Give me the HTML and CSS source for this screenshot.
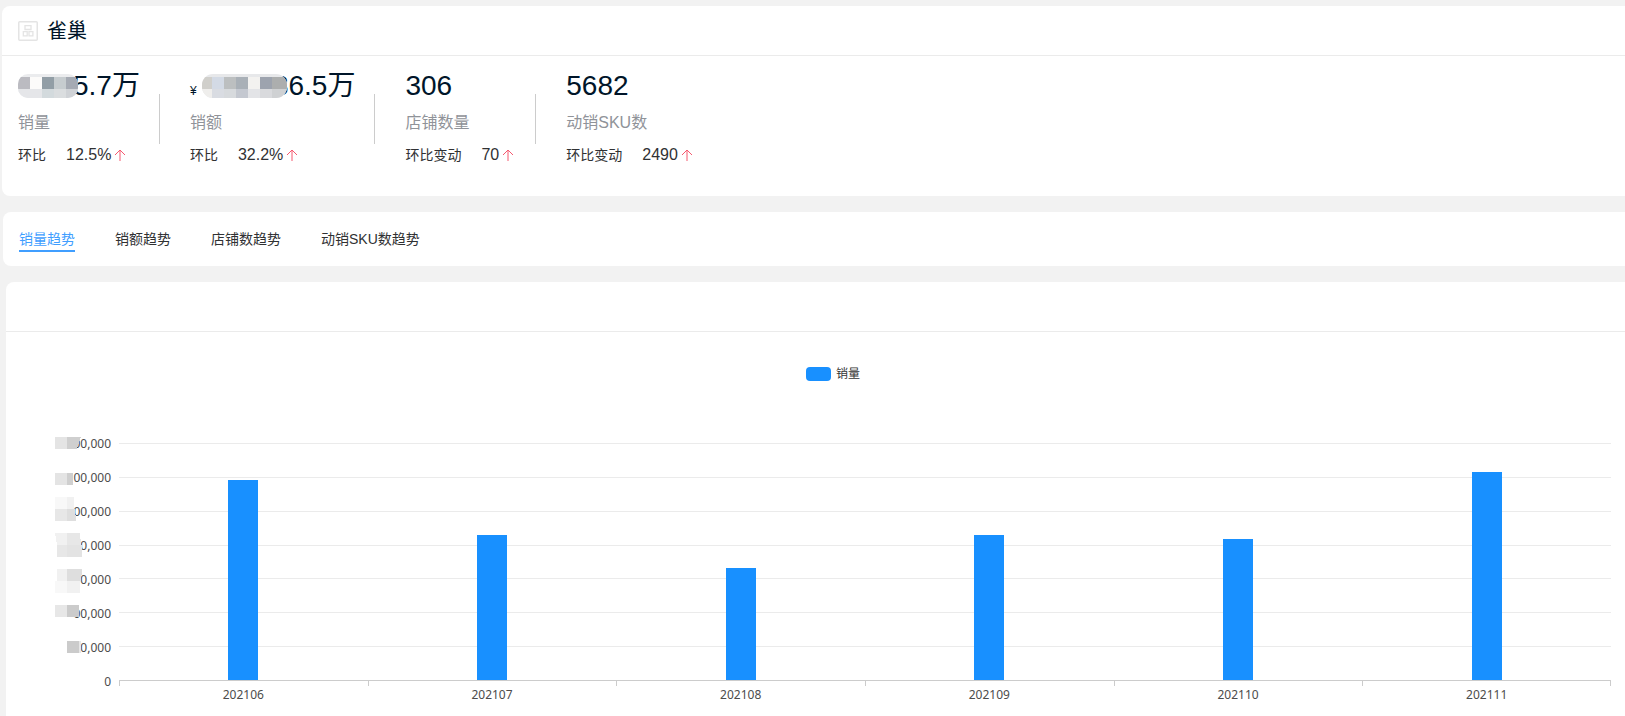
FILE: index.html
```html
<!DOCTYPE html>
<html lang="zh-CN">
<head>
    <meta charset="UTF-8">
    <meta name="viewport" content="width=device-width, initial-scale=1.0">
    <title>雀巢</title>
    <link rel="stylesheet" href="styles.css">
</head>
<body>
    <!-- Brand summary -->
    <section class="card summary">
        <header class="card-header">
            <svg class="brand-icon" width="20" height="20" viewBox="0 0 20 20" fill="none" stroke="#e4e4e4">
                <rect x="0.75" y="0.75" width="18.5" height="18.5" rx="1" stroke-width="1.5"/>
                <path stroke-width="1.3" d="M7 4.700h6v3.800H7zM5.300 10.700h3.900v4.100H5.300zM11 10.700h3.900v4.100H11z"/>
            </svg>
            <h1>雀巢</h1>
        </header>
        <div class="metrics">
            <div class="metric">
                <div class="value">
                    <svg class="mask" width="60" height="25" viewBox="0 0 60 25">
                        <clipPath id="clipVolume"><rect width="60" height="24" rx="10"/></clipPath>
                        <g clip-path="url(#clipVolume)" shape-rendering="crispEdges">
                            <rect width="60" height="24" fill="#ebecee"/>
                            <rect y="3" width="12" height="12" fill="#bbbbc1"/>
                            <rect x="12" y="3" width="12" height="12" fill="#fcfbfa"/>
                            <rect x="24" y="3" width="12" height="12" fill="#929ea6"/>
                            <rect x="36" y="3" width="12" height="12" fill="#c6cccf"/>
                            <rect x="48" y="3" width="12" height="12" fill="#a5aab3"/>
                            <rect y="15" width="24" height="9" fill="#e5e6e9"/>
                            <rect x="24" y="15" width="12" height="9" fill="#d3dadd"/>
                            <rect x="36" y="15" width="12" height="9" fill="#dadddf"/>
                            <rect x="48" y="15" width="12" height="9" fill="#cfd2d6"/>
                        </g>
                    </svg><span>5.7万</span>
                </div>
                <div class="label">销量</div>
                <div class="change">
                    <span class="change-label">环比</span>
                    <span>12.5%</span>
                    <svg class="arrow" viewBox="0 0 16 16"><path d="M8 14V3M3 8l5-5 5 5"/></svg>
                </div>
            </div>
            <div class="metric">
                <div class="value">
                    <small>¥</small>
                    <svg class="mask mask-wide" width="85" height="25" viewBox="0 0 85 25">
                        <clipPath id="clipSales"><rect width="85" height="24" rx="11"/></clipPath>
                        <g clip-path="url(#clipSales)" shape-rendering="crispEdges">
                            <rect width="85" height="24" fill="#e7e8ea"/>
                            <rect y="3" width="10" height="12" fill="#d0cfcb"/>
                            <rect x="10" y="3" width="12" height="12" fill="#d3dae5"/>
                            <rect x="22" y="3" width="12" height="12" fill="#bcbfc0"/>
                            <rect x="34" y="3" width="12" height="12" fill="#a9b0b7"/>
                            <rect x="46" y="3" width="12" height="12" fill="#f3f2f0"/>
                            <rect x="58" y="3" width="12" height="12" fill="#9da3ae"/>
                            <rect x="70" y="3" width="15" height="12" fill="#acaeae"/>
                            <rect y="15" width="10" height="9" fill="#efeeec"/>
                            <rect x="10" y="15" width="12" height="9" fill="#d9dce2"/>
                            <rect x="22" y="15" width="12" height="9" fill="#d7dadd"/>
                            <rect x="34" y="15" width="12" height="9" fill="#c4c8d0"/>
                            <rect x="46" y="15" width="12" height="9" fill="#e3e4e7"/>
                            <rect x="58" y="15" width="12" height="9" fill="#d9dadd"/>
                            <rect x="70" y="15" width="15" height="9" fill="#cfd1d3"/>
                        </g>
                    </svg><span>36.5万</span>
                </div>
                <div class="label">销额</div>
                <div class="change">
                    <span class="change-label">环比</span>
                    <span>32.2%</span>
                    <svg class="arrow" viewBox="0 0 16 16"><path d="M8 14V3M3 8l5-5 5 5"/></svg>
                </div>
            </div>
            <div class="metric">
                <div class="value">306</div>
                <div class="label">店铺数量</div>
                <div class="change">
                    <span class="change-label">环比变动</span>
                    <span>70</span>
                    <svg class="arrow" viewBox="0 0 16 16"><path d="M8 14V3M3 8l5-5 5 5"/></svg>
                </div>
            </div>
            <div class="metric">
                <div class="value">5682</div>
                <div class="label">动销SKU数</div>
                <div class="change">
                    <span class="change-label">环比变动</span>
                    <span>2490</span>
                    <svg class="arrow" viewBox="0 0 16 16"><path d="M8 14V3M3 8l5-5 5 5"/></svg>
                </div>
            </div>
        </div>
    </section>

    <!-- Trend tabs -->
    <nav class="card tabs">
        <button type="button" class="tab active">销量趋势</button>
        <button type="button" class="tab">销额趋势</button>
        <button type="button" class="tab">店铺数趋势</button>
        <button type="button" class="tab">动销SKU数趋势</button>
    </nav>

    <!-- Chart -->
    <section class="card chart-card">
        <header class="card-header chart-header"></header>
        <div class="chart">
            <div class="legend"><span class="swatch"></span>销量</div>
            <div class="chart-body">
                <div class="y-axis">
                    <span>00,000</span>
                    <span>00,000</span>
                    <span>00,000</span>
                    <span>00,000</span>
                    <span>00,000</span>
                    <span>00,000</span>
                    <span>00,000</span>
                    <span>0</span>
                    <svg class="axis-mask" width="27" height="216" viewBox="0 0 27 216" shape-rendering="crispEdges">
                        <path fill="#e4e4e4" d="M0 0h12v12H0zM0 36h12v12H0z"/>
                        <path fill="#cfcfcf" d="M12 0h14l-4 12H12zM12 36h6v12h-6z"/>
                        <path fill="#f8f8f8" d="M0 60h12v12H0zM0 144h12v12H0z"/>
                        <path fill="#f1f1f1" d="M12 60h7v12h-7zM0 96h12v12H2zM2 132h10v12H2zM12 144h13v12H12z"/>
                        <path fill="#e7e7e7" d="M0 72h12v12H0zM12 96h13l1 12H12zM2 108h10v12H2zM0 168h12v12H0zM24 204h2v12h-2z"/>
                        <path fill="#dedede" d="M12 72h8l1 12h-9zM12 132h15l-1 12H12z"/>
                        <path fill="#e3e3e3" d="M12 108h15v12H12z"/>
                        <path fill="#cbcbcb" d="M12 168h12v12H12zM12 204h12v12H12z"/>
                    </svg>
                </div>
                <div class="plot">
                    <div class="grid-lines"><i></i><i></i><i></i><i></i><i></i><i></i><i></i><i></i></div>
                    <div class="bars">
                        <div class="bar" style="height: 84.4%"></div>
                        <div class="bar" style="height: 61.2%"></div>
                        <div class="bar" style="height: 47.3%"></div>
                        <div class="bar" style="height: 61.3%"></div>
                        <div class="bar" style="height: 59.3%"></div>
                        <div class="bar" style="height: 87.8%"></div>
                    </div>
                </div>
                <div class="x-axis">
                    <span>202106</span>
                    <span>202107</span>
                    <span>202108</span>
                    <span>202109</span>
                    <span>202110</span>
                    <span>202111</span>
                </div>
            </div>
        </div>
    </section>
</body>
</html>
```

FILE: styles.css
```css
* {
    box-sizing: border-box;
}

body {
    margin: 0;
    padding-top: 6px;
    min-height: 100vh;
    display: flex;
    flex-direction: column;
    gap: 16px;
    background-color: #f2f2f2;
    color: #303133;
    font-family: "Liberation Sans", Arial, "Noto Sans CJK SC", sans-serif;
    font-size: 14px;
}

.card {
    background-color: #fff;
    border-radius: 8px 0 0 8px;
}

.card-header {
    display: flex;
    align-items: center;
    gap: 9px;
    height: 50px;
    padding: 0 16px;
    border-bottom: 1px solid #ebebeb;
}

/* Summary */
.summary {
    margin-left: 2px;
    height: 190px;
}

h1 {
    margin: 0;
    color: #001529;
    font-size: 20px;
    font-weight: 400;
    line-height: 30px;
}

.metrics {
    display: flex;
    align-items: flex-start;
    padding: 12px 16px 0;
}

.metric {
    position: relative;
    padding-right: 20px;
}

.metric + .metric {
    margin-left: 30px;
}

/* Divider between two metrics */
.metric:not(:last-child)::after {
    content: "";
    position: absolute;
    top: 26px;
    right: 0;
    width: 1px;
    height: 50px;
    background-color: #ccc;
}

.value {
    display: flex;
    align-items: center;
    height: 36px;
    color: #001529;
    font-size: 28px;
    line-height: 36px;
}

.value small {
    width: 12px;
    padding-top: 10px;
    font-size: 12px;
}

.mask {
    position: relative;
    z-index: 1;
    margin-right: -5px;
}

.mask-wide {
    margin-right: -14px;
}

.label {
    margin-top: 7px;
    color: #909399;
    font-size: 16px;
    line-height: 24px;
}

.change {
    display: flex;
    align-items: center;
    margin-top: 8px;
    font-size: 16px;
    line-height: 24px;
}

.change-label {
    margin-right: 20px;
    font-size: 14px;
}

.arrow {
    width: 16px;
    height: 16px;
    margin-left: 1px;
    fill: none;
    stroke: #f5596f;
}

/* Tabs */
.tabs {
    display: flex;
    align-items: center;
    gap: 40px;
    height: 54px;
    margin-left: 3px;
    padding: 3px 16px 0;
}

.tab {
    padding: 0;
    border: none;
    border-bottom: 2px solid transparent;
    background: none;
    color: #303133;
    font-family: inherit;
    font-size: 14px;
    line-height: 21px;
    cursor: pointer;
}

.tab.active {
    border-bottom-color: #409eff;
    color: #409eff;
}

/* Chart */
.chart-card {
    flex-grow: 1;
    margin-left: 6px;
    border-radius: 8px 0 0 0;
}

.chart {
    padding: 33px 14px 8px 49px;
    color: #4c4c4c;
    font-family: "Noto Sans", "Noto Sans CJK SC", sans-serif;
    font-size: 12px;
    line-height: 16px;
}

.legend {
    display: flex;
    justify-content: center;
    align-items: center;
    gap: 5px;
    height: 18px;
    margin-bottom: 60px;
    color: #333;
}

.swatch {
    width: 25px;
    height: 14px;
    border-radius: 4px;
    background-color: #1890ff;
}

.chart-body {
    display: grid;
    grid-template-columns: 56px 1fr;
    grid-template-rows: 238px auto;
    column-gap: 8px;
}

.y-axis {
    position: relative;
    display: flex;
    flex-direction: column;
    justify-content: space-between;
    margin: -7px 0 -9px;
    text-align: right;
}

.axis-mask {
    position: absolute;
    top: 1px;
    left: 0;
}

.plot {
    display: grid;
}

.grid-lines,
.bars {
    grid-area: 1 / 1;
    display: flex;
}

.grid-lines {
    flex-direction: column;
    justify-content: space-between;
}

.grid-lines i {
    height: 1px;
    background-color: #ebebeb;
}

.grid-lines i:last-child {
    background-color: #ccc;
}

.bars {
    justify-content: space-around;
    align-items: flex-end;
    padding-bottom: 1px;
}

.bar {
    width: 30px;
    background-color: #1890ff;
}

.x-axis {
    grid-column: 2;
    display: flex;
}

/* Ticks are drawn on the left edge of every category */
.x-axis span {
    flex: 1;
    padding-top: 6px;
    background: linear-gradient(#ccc, #ccc) left top / 1px 5px no-repeat;
    text-align: center;
}

.x-axis span:last-child {
    background: linear-gradient(#ccc, #ccc) left top / 1px 5px no-repeat,
                linear-gradient(#ccc, #ccc) right top / 1px 5px no-repeat;
}
```
